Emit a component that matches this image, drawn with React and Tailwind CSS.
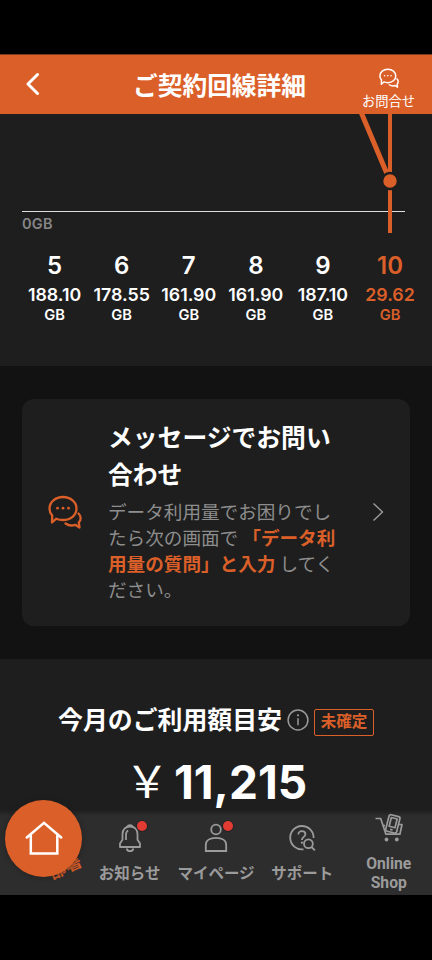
const months = [
  { month: '5', usage: '188.10' },
  { month: '6', usage: '178.55' },
  { month: '7', usage: '161.90' },
  { month: '8', usage: '161.90' },
  { month: '9', usage: '187.10' },
  { month: '10', usage: '29.62', current: true },
]

function ChatIcon({ className, strokeWidth = 2 }) {
  return (
    <svg viewBox="0 0 34 34" className={className} fill="none" stroke="currentColor" strokeWidth={strokeWidth} strokeLinejoin="round" strokeLinecap="round">
      <path d="M4.200 20.500C2.400 18.400 1.500 16.500 1.500 13.700C1.500 7 7.400 2 15 2s13.500 5 13.500 11.600S22.600 25 15 25c-2.500 0-4.700-.4-6.700-1.300L4 27.500Z" />
      <path d="M17.500 28.500c2.500 1.800 6.500 2.500 9.800 1.300l4.200 2.700-.7-5c2.500-2.700 2.500-6.500-.3-9" />
      <g fill="currentColor" stroke="none">
        <circle cx="9.500" cy="13.200" r="1.400" />
        <circle cx="15" cy="13.200" r="1.400" />
        <circle cx="20.500" cy="13.200" r="1.400" />
      </g>
    </svg>
  )
}

function BellIcon() {
  return (
    <svg viewBox="0 0 24 30" className="h-[30px] w-6" fill="none" stroke="currentColor" strokeWidth="1.800" strokeLinejoin="round">
      <path d="M9.300 3.800a2.800 2.300 0 0 1 5.400 0" fill="currentColor" />
      <path d="M12 3.500c-4.600 0-7.500 3.200-7.500 7.600v5.700L2 20.500V24h20v-3.500l-2.500-3.700v-5.700c0-4.400-2.900-7.600-7.500-7.600Z" />
      <path d="M8 17v-5.500c0-2 .8-3.300 2.200-4" />
      <path d="M8.700 25.500c.3 1.800 1.600 2.700 3.300 2.700s3-.9 3.300-2.700" />
    </svg>
  )
}

function PersonIcon() {
  return (
    <svg viewBox="0 0 24 30" className="h-[30px] w-6" fill="none" stroke="currentColor" strokeWidth="1.800">
      <circle cx="12" cy="6.500" r="4.800" />
      <path d="M1.800 28V22c0-4.500 4-7.200 10.200-7.200S22.200 17.500 22.200 22v6Z" />
    </svg>
  )
}

function SupportIcon() {
  return (
    <svg viewBox="0 0 28 28" className="h-7 w-7" fill="none" stroke="currentColor" strokeWidth="1.800">
      <path d="M15.500 25.300A11.700 11.700 0 1 1 25.600 14" />
      <path d="M10.400 10.500c0-2.100 1.500-3.300 3.500-3.300s3.500 1.200 3.500 3c0 2.700-3.500 2.700-3.500 5.800" />
      <circle cx="13.900" cy="18.700" r="1.100" fill="currentColor" stroke="none" />
      <circle cx="20.400" cy="19.800" r="4.400" />
      <path d="m23.500 23 3.400 3.400" />
    </svg>
  )
}

function CartIcon() {
  return (
    <svg viewBox="0 0 28 30" className="h-[30px] w-7" fill="none" stroke="currentColor" strokeWidth="1.700" strokeLinejoin="round">
      <path d="M.5 5.500h5.200l5.200 15.700h14L27 11.500h-3" />
      <path d="m8 12.500 2 .1" />
      <g transform="rotate(14 17.500 11)">
        <rect x="12.200" y="2.300" width="11.200" height="17" rx="1.800" fill="#2d2d2d" />
        <rect x="14.800" y="5" width="6" height="9" />
        <path d="M16.500 16.800h2.600" />
      </g>
      <circle cx="11.500" cy="26.500" r="1.900" fill="currentColor" stroke="none" />
      <circle cx="21.800" cy="26.500" r="1.900" fill="currentColor" stroke="none" />
    </svg>
  )
}

function NavItem({ icon, label, badge }) {
  return (
    <button type="button" className="flex w-[86.400px] shrink-0 flex-col items-center pt-[13px]">
      <span className="relative flex h-[30px] items-center justify-center">
        {icon}
        {badge ? <span className="absolute -top-[2px] -right-[5px] h-[10px] w-[10px] rounded-full bg-[#e23b34] ring-1 ring-[#242424]" /> : null}
      </span>
      <span className="mt-[10px] text-[15.500px] leading-[22px] font-bold whitespace-nowrap">{label}</span>
    </button>
  )
}

function App() {
  return (
    <div className="flex h-[960px] w-[432px] flex-col overflow-hidden bg-black font-['Noto_Sans_CJK_JP',sans-serif] text-white">
      <header className="mt-[54px] grid h-[60px] shrink-0 grid-cols-[90px_1fr_90px] items-center border-t border-[#7a3a1c] bg-[#db5f29]">
        <svg viewBox="0 0 14 24" className="mb-[1px] ml-[26px] h-6 w-[14px]" fill="none" stroke="currentColor" strokeWidth="3" strokeLinecap="round" strokeLinejoin="round">
          <path d="M11.500 2.500 2 12l9.500 9.500" />
        </svg>
        <h1 className="pb-[2px] pl-[7px] text-center text-[24.700px] leading-[36px] font-bold whitespace-nowrap">ご契約回線詳細</h1>
        <div className="flex flex-col items-center pt-[8px] pl-[3px]">
          <ChatIcon className="h-5 w-5" strokeWidth={2.500} />
          <span className="mt-[4px] text-[13.300px] leading-[18px]">お問合せ</span>
        </div>
      </header>

      <section className="h-[252px] shrink-0 bg-[#1e1e1e] font-['Inter',sans-serif]">
        <svg viewBox="0 0 432 119" className="block h-[119px] w-full" fill="none">
          <path d="M22 97.500h383" stroke="#e2dedb" strokeWidth="1.200" />
          <path d="M390 0v119" stroke="#db5f29" strokeWidth="4" />
          <path d="M361 -2 390 67" stroke="#db5f29" strokeWidth="5" />
          <circle cx="390" cy="67" r="8" fill="#db5f29" stroke="#1e1e1e" strokeWidth="2.600" />
        </svg>
        <p className="-mt-[17px] ml-[22px] text-[14.500px] leading-4 font-semibold tracking-[0.3px] text-[#868686]">0GB</p>
        <ul className="mt-[19px] ml-[21px] flex text-center">
          {months.map((item) => (
            <li key={item.month} className={item.current ? 'w-[67.100px] font-semibold text-[#db5f29]' : 'w-[67.100px] font-semibold'}>
              <p className="text-[24px] leading-[30px]">{item.month}</p>
              <p className="mt-px text-[17.800px] leading-[26px]">{item.usage}</p>
              <p className="text-[14.700px] leading-[14px]">GB</p>
            </li>
          ))}
        </ul>
      </section>

      <section className="h-[293px] shrink-0 bg-[#121212] px-[22px] pt-[33px]">
        <article className="flex h-[227px] w-[388px] items-center rounded-xl bg-[#1e1e1e] pb-[2px] pl-[26px]">
          <ChatIcon className="h-[34px] w-[34px] shrink-0 text-[#db5f29]" strokeWidth={2.300} />
          <div className="-mt-[4px] ml-[26px] w-[240px] shrink-0 whitespace-nowrap">
            <h2 className="text-[24.800px] leading-[37px] font-bold">
              メッセージでお問い<br />合わせ
            </h2>
            <p className="mt-[6px] text-[18.600px] leading-[26px] font-normal text-[#8d8d8d]">
              データ利用量でお困りでし<br />
              たら次の画面で <b className="font-bold text-[#db5f29]">「データ利<br />用量の質問」と入力</b> してく<br />
              ださい。
            </p>
          </div>
          <svg viewBox="0 0 12 20" className="ml-[24px] h-5 w-3" fill="none" stroke="#a0a0a0" strokeWidth="1.300">
            <path d="m1.500 1.500 9 8.500-9 8.500" />
          </svg>
        </article>
      </section>

      <section className="h-[151px] shrink-0 bg-[#1e1e1e] pt-[41px]">
        <div className="flex items-center justify-center">
          <h2 className="text-[24.900px] leading-[36px] font-bold whitespace-nowrap">今月のご利用額目安</h2>
          <svg viewBox="0 0 22 22" className="mt-[3px] ml-[5px] h-[22px] w-[22px]" fill="none" stroke="#9a9a9a" strokeWidth="1.500">
            <circle cx="11" cy="11" r="9.900" />
            <path d="M11 9.300v7" />
            <circle cx="11" cy="6.300" r="1.100" fill="#9a9a9a" stroke="none" />
          </svg>
          <span className="mt-[8px] ml-[5px] flex h-[27px] w-[60px] items-center justify-center rounded-xs border border-[#db5f29] pb-[3px] text-[15.500px] font-bold whitespace-nowrap text-[#db5f29]">未確定</span>
        </div>
        <p className="mt-[17px] flex h-[56px] items-center justify-center whitespace-nowrap">
          <span className="-mt-[4px] text-[44px] leading-[56px]">￥</span>
          <span className="mt-[2px] ml-[5px] font-['Inter',sans-serif] text-[46px] leading-[56px] font-bold">11,215</span>
        </p>
      </section>

      <nav className="relative flex h-[85px] shrink-0 bg-[#2d2d2d] bg-linear-to-b from-[#1e1e1e] to-[#2d2d2d] to-[6px] font-['Roboto','Noto_Sans_CJK_JP',sans-serif] text-[#9b9b9b]">
        <div className="w-[86.400px] shrink-0">
          <span className="absolute top-[47px] left-[48px] -rotate-[24deg] text-[17px] leading-5 font-bold text-[#d25b27]">部署</span>
          <button type="button" aria-label="ホーム" className="absolute -top-[10px] left-[5px] flex h-[77px] w-[77px] items-center justify-center rounded-full bg-[#db5f29] text-white shadow-[0_0_4px_1px_#1b1b1b80]">
            <svg viewBox="0 0 38 34" className="-mt-[2px] h-[34px] w-[38px]" fill="none" stroke="currentColor" strokeWidth="2.500" strokeLinecap="round" strokeLinejoin="miter">
              <path d="M1.800 16.500 19 1.900l17.200 14.600" />
              <path d="M5.800 14v18.500h26.500V14" />
            </svg>
          </button>
        </div>
        <NavItem icon={<BellIcon />} label="お知らせ" badge />
        <NavItem icon={<PersonIcon />} label="マイページ" badge />
        <NavItem icon={<SupportIcon />} label="サポート" />
        <button type="button" className="flex w-[86.400px] shrink-0 flex-col items-center pt-[3px]">
          <CartIcon />
          <span className="mt-[11px] text-[15.700px] leading-[19px] font-bold">Online<br />Shop</span>
        </button>
      </nav>
    </div>
  )
}

export default App
